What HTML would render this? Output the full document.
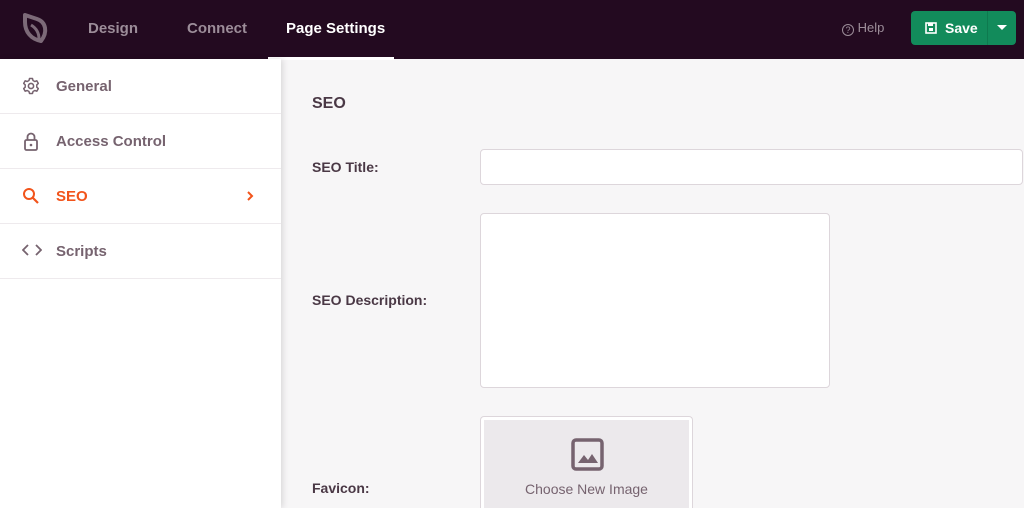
<!DOCTYPE html>
<html style="overflow:hidden;height:508px"><head><style>
*{box-sizing:border-box;margin:0;padding:0}
body{width:1024px;height:508px;overflow:hidden;font-family:"Liberation Sans",sans-serif;background:#f7f6f7;position:relative}
.hdr{position:absolute;left:0;top:0;width:1024px;height:59px;background:#230a20}
.nav{position:absolute;top:20px;font-size:15px;font-weight:bold;color:#9c8d99}
.act{color:#fff}
.ul{position:absolute;left:268px;top:57px;width:126px;height:3px;background:#fff}
.help{position:absolute;left:842px;top:20px;color:#9c8d99;font-size:13px}
.save{position:absolute;left:911px;top:11px;width:105px;height:34px;background:#128b5b;border-radius:4px}
.save .t{position:absolute;left:34px;top:9px;color:#fff;font-weight:bold;font-size:14px}
.save .sep{position:absolute;left:76px;top:0;width:1px;height:34px;background:#0e7a4f}
.side{position:absolute;left:0;top:59px;width:281px;height:449px;background:#fff;box-shadow:2px 0 6px rgba(0,0,0,.12)}
.it{height:55px;border-bottom:1px solid #eeeaed;position:relative;font-size:15px;font-weight:bold;color:#76636f}
.it span{position:absolute;left:56px;top:19px}
.it svg{position:absolute;left:22px;top:18px}
.lbl{position:absolute;left:312px;font-size:14px;font-weight:bold;color:#4a3845}
.inp{position:absolute;background:#fff;border:1px solid #ddd6db;border-radius:4px}
</style></head><body>
<div class="hdr">
<svg style="position:absolute;left:21px;top:12px" width="28" height="32" viewBox="0 0 28 32"><path d="M4 3 L16 7 C25 10 27 20 20 29 C10 27 4 20 4 10 Z" fill="none" stroke="#7c6a78" stroke-width="4" stroke-linejoin="round"/><path d="M10 13 C15 16 18 21 18 27" fill="none" stroke="#7c6a78" stroke-width="3"/></svg>
<div class="nav" style="left:88px">Design</div>
<div class="nav" style="left:187px">Connect</div>
<div class="nav act" style="left:286px">Page Settings</div>
<div class="ul"></div>
<div class="help"><span style="display:inline-block;width:12px;height:12px;border:1.5px solid #9c8d99;border-radius:50%;font-size:9px;text-align:center;line-height:10px;vertical-align:-1px">?</span> Help</div>
<div class="save"><svg style="position:absolute;left:14px;top:11px" width="12" height="12" viewBox="0 0 12 12"><rect x="1" y="1" width="10" height="10" fill="none" stroke="#fff" stroke-width="1.6"/><rect x="4" y="6" width="4" height="3" fill="#fff"/><rect x="3" y="1" width="5" height="3" fill="#fff"/></svg><span class="t">Save</span><div class="sep"></div><div style="position:absolute;left:86px;top:14px;border-left:5px solid transparent;border-right:5px solid transparent;border-top:5px solid #fff"></div></div>
</div>
<div class="side">
<div class="it"><svg width="18" height="18" viewBox="0 0 18 18"><circle cx="9" cy="9" r="2.6" fill="none" stroke="#76636f" stroke-width="1.6"/><path d="M7.5 1.5h3l.5 2 1.8 1 2-.7 1.5 2.6-1.5 1.4v2.4l1.5 1.4-1.5 2.6-2-.7-1.8 1-.5 2h-3l-.5-2-1.8-1-2 .7-1.5-2.6 1.5-1.4V7.8L1.7 6.4l1.5-2.6 2 .7 1.8-1z" fill="none" stroke="#76636f" stroke-width="1.5" stroke-linejoin="round"/></svg><span>General</span></div>
<div class="it"><svg width="18" height="20" viewBox="0 0 18 20"><rect x="3" y="8" width="12" height="10" rx="1.5" fill="none" stroke="#76636f" stroke-width="1.8"/><path d="M5.5 8 V5 a3.5 3.5 0 0 1 7 0 V8" fill="none" stroke="#76636f" stroke-width="1.8"/><circle cx="9" cy="13" r="1.3" fill="#76636f"/></svg><span>Access Control</span></div>
<div class="it" style="color:#f2541b"><svg width="18" height="18" viewBox="0 0 18 18"><circle cx="7" cy="7" r="5" fill="none" stroke="#f2541b" stroke-width="2"/><path d="M11 11 L16 16" stroke="#f2541b" stroke-width="2.2"/></svg><span>SEO</span><svg style="left:246px;top:22px" width="8" height="10" viewBox="0 0 8 10"><path d="M2 1 L6 5 L2 9" fill="none" stroke="#f2541b" stroke-width="2"/></svg></div>
<div class="it"><svg width="20" height="16" viewBox="0 0 20 16"><path d="M6 3 L1 8 L6 13 M14 3 L19 8 L14 13" fill="none" stroke="#76636f" stroke-width="1.8"/></svg><span>Scripts</span></div>
</div>
<div class="lbl" style="top:95px;font-size:16px">SEO</div>
<div class="lbl" style="top:159px">SEO Title:</div>
<div class="inp" style="left:480px;top:149px;width:543px;height:36px"></div>
<div class="lbl" style="top:292px">SEO Description:</div>
<div class="inp" style="left:480px;top:213px;width:350px;height:175px"></div>
<div class="lbl" style="top:480px">Favicon:</div>
<div class="inp" style="left:480px;top:416px;width:213px;height:92px;border-bottom:none;border-radius:4px 4px 0 0;background:#fff;padding:3px 3px 0"><div style="background:#ece9ec;width:100%;height:100%;position:relative"><svg style="position:absolute;left:87px;top:18px" width="34" height="34" viewBox="0 0 34 34"><rect x="2" y="2" width="29" height="29" rx="3" fill="none" stroke="#76636f" stroke-width="3.5"/><path d="M7 25 L13 17 L17 22 L21 16 L27 25Z" fill="#76636f"/></svg><div style="position:absolute;left:0;right:0;top:61px;text-align:center;color:#76636f;font-size:14px">Choose New Image</div></div></div>
</body></html>
